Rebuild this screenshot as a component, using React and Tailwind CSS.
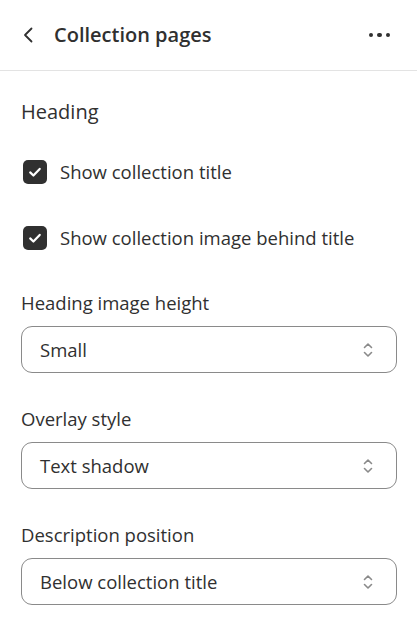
import React from 'react';

const Check = () => (
  <span className="flex items-center justify-center w-6 h-6 rounded-[5px] bg-[#303030]">
    <svg width="24" height="24" viewBox="0 0 24 24" fill="none">
      <path d="M7.2 12.4l3.2 3.1 6.3-6.6" stroke="white" strokeWidth="2.2" strokeLinecap="round" strokeLinejoin="round" />
    </svg>
  </span>
);

const Select = ({ label, value }) => (
  <div className="flex flex-col">
    <label className="text-[18.5px] text-[#303030] leading-6 mb-[11px]">{label}</label>
    <div className="flex items-center justify-between h-[47px] pl-[18px] pr-[21px] border border-[#8a8a8a] rounded-[11px]">
      <span className="text-[18.5px] text-[#303030]">{value}</span>
      <svg width="14" height="20" viewBox="0 0 14 20" fill="none">
        <path d="M3.5 7.5L7 4l3.5 3.5M3.5 12.5L7 16l3.5-3.5" stroke="#8a8a8a" strokeWidth="1.6" strokeLinecap="round" strokeLinejoin="round" />
      </svg>
    </div>
  </div>
);

const App = () => {
  return (
    <div className="w-[417px] h-[632px] bg-white overflow-hidden" style={{ fontFamily: '"Open Sans", "Noto Sans", sans-serif' }}>
      {/* Header */}
      <div className="flex items-center h-[71px] pl-[20px] pr-[27px] border-b border-[#e3e3e3]">
        <svg width="18" height="18" viewBox="0 0 18 18" fill="none">
          <path d="M11.5 2.5L5 9l6.5 6.5" stroke="#303030" strokeWidth="1.8" strokeLinecap="round" strokeLinejoin="round" />
        </svg>
        <h1 className="ml-[16px] text-[20px] font-semibold text-[#303030] flex-1">Collection pages</h1>
        <div className="flex gap-[4px]">
          <span className="w-[4.5px] h-[4.5px] rounded-full bg-[#303030]" />
          <span className="w-[4.5px] h-[4.5px] rounded-full bg-[#303030]" />
          <span className="w-[4.5px] h-[4.5px] rounded-full bg-[#303030]" />
        </div>
      </div>

      <div className="pl-[21px] pr-[20px] pt-[27px]">
        <h2 className="text-[20px] font-medium text-[#303030] leading-7">Heading</h2>

        <div className="flex flex-col gap-[42px] mt-[34px] pl-[2px]">
          <label className="flex items-center gap-[13px] h-6">
            <Check />
            <span className="text-[18.5px] text-[#303030]">Show collection title</span>
          </label>
          <label className="flex items-center gap-[13px] h-6">
            <Check />
            <span className="text-[18.5px] text-[#303030]">Show collection image behind title</span>
          </label>
        </div>

        <div className="flex flex-col gap-[34px] mt-[41px]">
          <Select label="Heading image height" value="Small" />
          <Select label="Overlay style" value="Text shadow" />
          <Select label="Description position" value="Below collection title" />
        </div>
      </div>
    </div>
  );
};

export default App;
